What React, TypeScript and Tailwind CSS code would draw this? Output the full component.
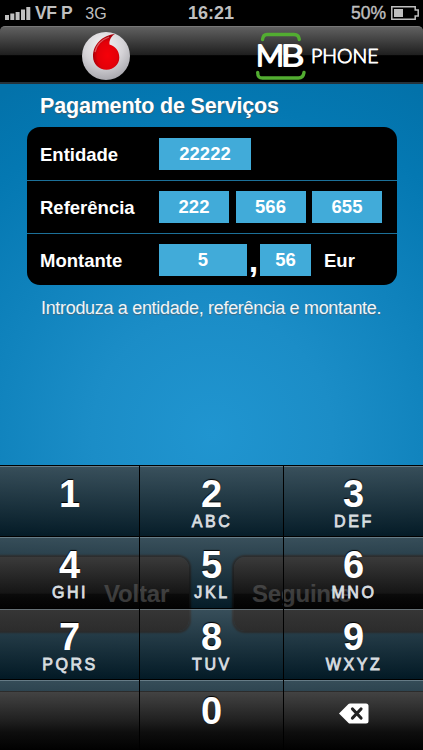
import React from 'react';

const keys = [
  { digit: '1', letters: '' },
  { digit: '2', letters: 'ABC' },
  { digit: '3', letters: 'DEF' },
  { digit: '4', letters: 'GHI' },
  { digit: '5', letters: 'JKL' },
  { digit: '6', letters: 'MNO' },
  { digit: '7', letters: 'PQRS' },
  { digit: '8', letters: 'TUV' },
  { digit: '9', letters: 'WXYZ' },
  { digit: '', letters: '' },
  { digit: '0', letters: '' },
  { digit: 'del', letters: '' }
];

const StatusBar = () => (
  <div className="relative h-[26px] bg-black flex items-center justify-between pl-[5px] pr-[4px] text-[#bfbfbf]">
    <div className="flex items-center">
      <svg width="27" height="14" viewBox="0 0 27 14" fill="#bfbfbf">
        <rect x="0" y="9" width="4" height="5" />
        <rect x="5.3" y="7.5" width="4" height="6.5" />
        <rect x="10.6" y="6" width="4" height="8" />
        <rect x="16" y="3.5" width="4" height="10.5" />
        <rect x="21.3" y="1" width="4" height="13" />
      </svg>
      <span className="ml-[3px] text-[17.5px] font-bold leading-[26px] tracking-[-0.4px]">VF P</span>
      <span className="ml-[13px] text-[16px] leading-[26px] pt-[2px]">3G</span>
    </div>
    <span className="absolute left-[188px] text-[18px] font-bold leading-[26px]">16:21</span>
    <div className="flex items-center">
      <span className="mr-[5px] text-[17.5px] leading-[26px] [-webkit-text-stroke:0.4px_#bfbfbf]">50%</span>
      <svg width="28" height="14" viewBox="0 0 28 14" fill="none" stroke="#bfbfbf" strokeWidth="1.5">
        <path d="M.8.8H24.2V4H27.2V10H24.2V13.2H.8Z" />
        <rect x="3" y="3" width="9" height="8" fill="#bfbfbf" stroke="none" />
      </svg>
    </div>
  </div>
);

const VodafoneLogo = () => (
  <svg width="48" height="48" viewBox="0 0 48 48">
    <defs>
      <radialGradient id="ball" cx="45%" cy="28%" r="75%">
        <stop offset="0" stopColor="#f4f3f4" />
        <stop offset="0.55" stopColor="#d5d3d7" />
        <stop offset="1" stopColor="#a5a4aa" />
      </radialGradient>
      <radialGradient id="drop" cx="55%" cy="60%" r="55%">
        <stop offset="0" stopColor="#f60009" />
        <stop offset="0.7" stopColor="#e30009" />
        <stop offset="1" stopColor="#a8000a" />
      </radialGradient>
    </defs>
    <circle cx="24" cy="24" r="24" fill="url(#ball)" />
    <path d="M33 2C21 3 11 12 11 24.500C11 32 17 37.700 24.500 37.700C32 37.700 37.300 32 37.300 25.500C37.300 18.500 33 14 27.500 12.500C27 8 29.500 4 33 2Z" fill="url(#drop)" />
    <path d="M27 5C20 7.500 14.500 13 13 20" fill="none" stroke="#fff" strokeOpacity=".35" strokeWidth="1.300" />
  </svg>
);

const PhoneLogo = () => (
  <svg width="126" height="50" viewBox="0 0 126 50">
    <g fill="none" stroke="#52ad31" strokeWidth="3.400" strokeLinecap="round">
      <path d="M6.500 7.500C7 3.500 8.500 2.500 11 2.500H38C41.500 2.500 43 4 43.300 7.500" />
      <path d="M1.700 40.500C1.700 44.500 3 46 6.500 46H42.500C46 46 47.500 44 48 40.500" />
    </g>
    <g fill="#fff" stroke="#fff" strokeLinejoin="round" fontFamily="Lato, sans-serif" fontWeight="300">
      <text x="0" y="34" fontSize="28.500" strokeWidth="2.200" textLength="28" lengthAdjust="spacingAndGlyphs">M</text>
      <text x="25" y="34" fontSize="28.500" strokeWidth="2.200" textLength="23" lengthAdjust="spacingAndGlyphs">B</text>
      <text x="55" y="31" fontSize="19.500" strokeWidth=".9" textLength="67.500" lengthAdjust="spacingAndGlyphs">PHONE</text>
    </g>
  </svg>
);

const Field = ({ value, width }: { value: string; width: string }) => (
  <div className={`${width} h-8 shrink-0 bg-[#41abd9] text-white text-[18.5px] font-bold leading-8 text-center`}>{value}</div>
);

const App = () => {
  return (
    <div className="relative w-[423px] h-[750px] overflow-hidden bg-black font-['Liberation_Sans',Arial,sans-serif] whitespace-nowrap">
      <StatusBar />

      {/* Header */}
      <header className="h-[58px] rounded-t-[5px] border-t border-[#777] border-b-2 border-b-[#26323a] bg-[linear-gradient(#606060_0%,#1e1e1e_51%,#000_52%,#000_100%)] flex items-start pl-[82px] pt-[5px]">
        <VodafoneLogo />
        <div className="ml-[126px]">
          <PhoneLogo />
        </div>
      </header>

      <main className="h-[666px] flex flex-col bg-[radial-gradient(circle_at_212px_350px,#2095d0_0px,#1b8dc7_120px,#0478b2_330px,#0372aa_400px)]">
        <h1 className="h-[43px] pt-[10px] pl-[40px] text-[21.500px] leading-6 font-bold tracking-[-0.18px] text-white [text-shadow:0_1px_1px_#4b5963]">Pagamento de Serviços</h1>

        {/* Payment form */}
        <section className="ml-[27px] w-[369.5px] h-[158px] shrink-0 rounded-[13px] bg-black text-white text-[18.500px] font-bold">
          <div className="h-[53px] flex items-center pl-[13px]">
            <span className="w-[119px] pt-[2px]">Entidade</span>
            <Field value="22222" width="w-[92px]" />
          </div>
          <div className="h-[53px] flex items-center pl-[13px] border-t border-[#1c7099]">
            <span className="w-[119px] pt-[2px]">Referência</span>
            <div className="flex gap-[6.5px]">
              <Field value="222" width="w-[70px]" />
              <Field value="566" width="w-[70px]" />
              <Field value="655" width="w-[70px]" />
            </div>
          </div>
          <div className="h-[52px] flex items-center pl-[13px] border-t border-[#1c7099]">
            <span className="w-[119px] pt-[2px]">Montante</span>
            <Field value="5" width="w-[88px]" />
            <span className="w-[13px] text-center text-[34px] leading-8">,</span>
            <Field value="56" width="w-[51px]" />
            <span className="ml-[13px] pt-[2px]">Eur</span>
          </div>
        </section>

        <p className="pt-[13px] pl-[41px] text-[18px] leading-5 tracking-[-0.32px] text-[#eef5f9] [text-shadow:0_1px_1px_#47687b]">Introduza a entidade, referência e montante.</p>
      </main>

      {/* Page buttons showing through the keypad */}
      <div className="absolute top-[557px] left-0 w-full flex justify-between text-[24px] font-bold tracking-[-0.2px] text-white">
        <div className="w-[189px] h-[74px] pl-[104px] leading-[74px] rounded-r-[11px] bg-[linear-gradient(#686868_0%,#303030_49%,#000_50%,#000_60%,#282828_100%)] shadow-[0_0_2px_2px_#222]">Voltar</div>
        <div className="w-[189px] h-[74px] pl-[18px] leading-[74px] rounded-l-[11px] bg-[linear-gradient(#686868_0%,#303030_49%,#000_50%,#000_60%,#282828_100%)] shadow-[0_0_2px_2px_#222]">Seguinte</div>
      </div>
      <div className="absolute top-[691px] left-0 w-full h-[59px] border-t border-black bg-[linear-gradient(#777_0%,#303030_49%,#000_70%,#000_100%)]" />

      {/* Keypad */}
      <div className="absolute top-[465px] left-0 w-full grid grid-cols-[140px_144px_139px] grid-rows-[71px_72px_71px_71px]">
        {keys.map((key, i) => (
          <div
            key={i}
            className={`border-t border-black bg-[linear-gradient(rgba(65,65,65,.8),rgba(1,1,1,.8))] shadow-[inset_0_1px_0_rgba(150,170,180,.5)] flex flex-col items-center text-white ${i % 3 < 2 ? 'border-r' : ''} ${i > 8 ? 'pt-[14px]' : 'pt-[11px]'}`}
          >
            {key.digit === 'del' ? (
              <svg className="mt-[9px]" width="30" height="21" viewBox="0 0 30 21">
                <path d="M0 10.500L9.500 1Q10 .5 11 .5H27Q29.500 .5 29.500 3V18Q29.500 20.500 27 20.500H11Q10 20.500 9.500 20Z" fill="#fff" />
                <path d="M13.500 6L22 15M22 6L13.500 15" stroke="#222" strokeWidth="3.200" strokeLinecap="round" />
              </svg>
            ) : (
              <>
                <span className="text-[38px] leading-[35px] font-bold [text-shadow:0_-1px_1px_#000]">{key.digit}</span>
                <span className="pl-[1px] mt-[1px] text-[16px] leading-[18px] tracking-[2.600px] text-[#d8dde0] [-webkit-text-stroke:0.8px_#d8dde0]">{key.letters}</span>
              </>
            )}
          </div>
        ))}
      </div>
    </div>
  );
};

export default App;
